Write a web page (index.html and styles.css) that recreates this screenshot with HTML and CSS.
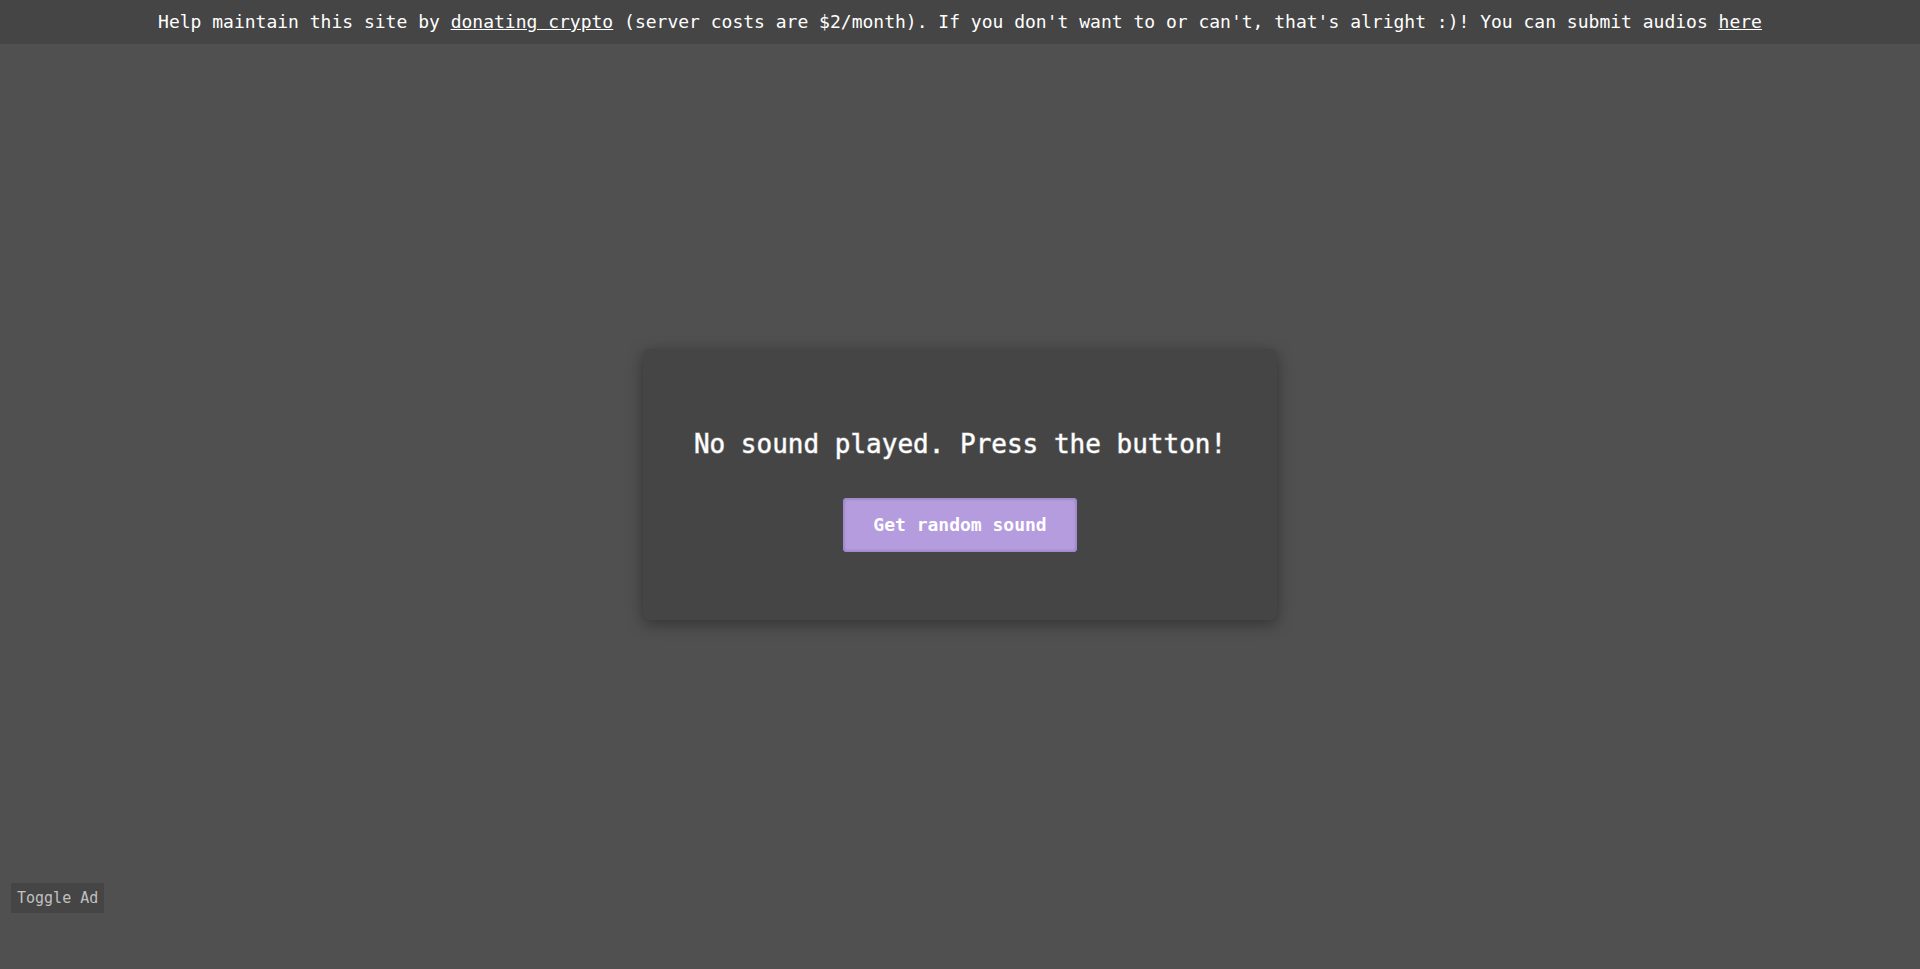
FILE: index.html
```html
<!DOCTYPE html>
<html lang="en">
<head>
<meta charset="utf-8">
<title>Random sound</title>
<link rel="stylesheet" href="styles.css">
</head>
<body>
<header class="banner">Help maintain this site by <a href="#donate">donating crypto</a> (server costs are $2/month). If you don't want to or can't, that's alright :)! You can submit audios <a href="#submit">here</a></header>
<main class="stage">
<section class="card">
<h1 class="status">No sound played. Press the button!</h1>
<button class="play" type="button">Get random sound</button>
</section>
</main>
<button class="toggle" type="button">Toggle Ad</button>
</body>
</html>
```

FILE: styles.css
```css
* {
  box-sizing: border-box;
}

body {
  display: flex;
  flex-direction: column;
  min-height: 100vh;
  margin: 0;
  background: #505050;
  color: #fff;
  font-family: "DejaVu Sans Mono", monospace;
}

.banner {
  padding: 11px;
  background: #454545;
  font-size: 18px;
  line-height: 22px;
  text-align: center;
}

.banner a {
  color: inherit;
}

/* Bottom padding balances the banner so the card is centred in the window. */
.stage {
  flex: 1;
  display: flex;
  align-items: center;
  justify-content: center;
  padding-bottom: 44px;
}

.card {
  display: flex;
  flex-direction: column;
  align-items: center;
  gap: 38px;
  width: 33%;
  min-width: 600px;
  padding: 79px 24px 68px;
  border-radius: 6px;
  background: #454545;
  box-shadow: 0 4px 16px rgba(0, 0, 0, 0.36);
}

.status {
  margin: 0;
  font-size: 26px;
  font-weight: 500;
  line-height: 32px;
  -webkit-text-stroke: 1px rgba(255, 255, 255, 0.5);
}

.play {
  padding: 15px 30px;
  border: 0;
  border-radius: 4px;
  background: #b59cde;
  box-shadow: inset 0 0 2px 2px #a089c8;
  color: #fff;
  font: bold 18px/24px "DejaVu Sans Mono", monospace;
}

.toggle {
  position: fixed;
  bottom: 56px;
  left: 11px;
  padding: 5px 6px;
  border: 0;
  border-radius: 0;
  background: #454545;
  color: #c0c0c0;
  font: 15px/20px "DejaVu Sans Mono", monospace;
}
```
